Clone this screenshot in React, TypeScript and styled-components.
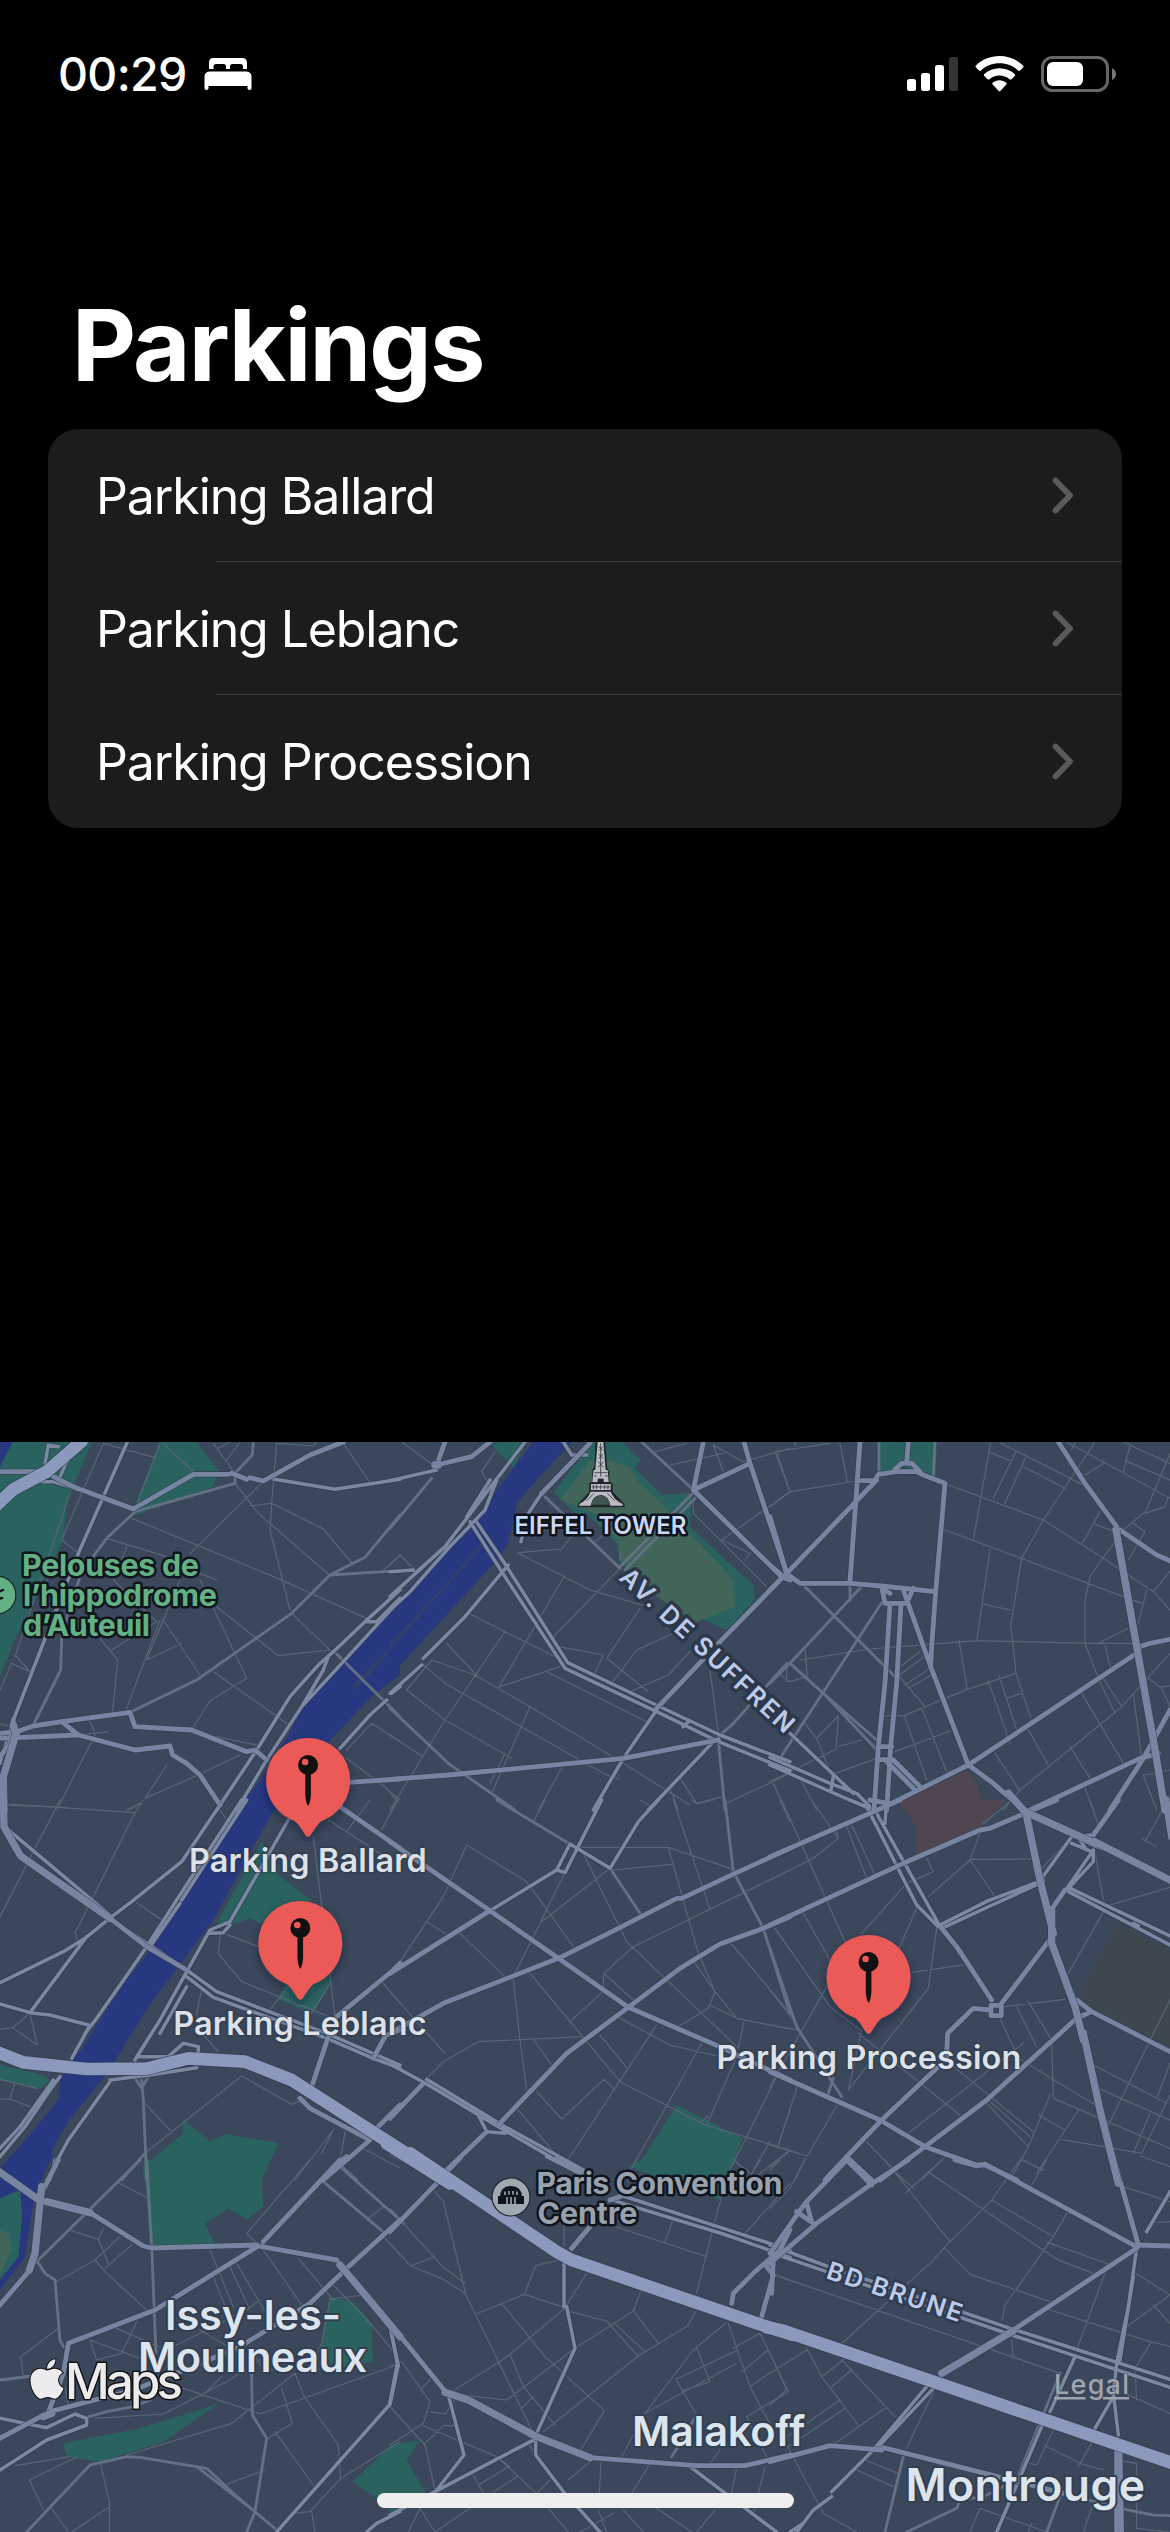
import React from "react";
import styled, { createGlobalStyle } from "styled-components";
import { FaApple } from "react-icons/fa";

const GlobalStyle = createGlobalStyle`
  body { margin: 0; background: #000; }
  * { box-sizing: border-box; }
`;

const Screen = styled.main`
  width: 1170px;
  height: 2532px;
  display: flex;
  flex-direction: column;
  overflow: hidden;
  background: #000;
  color: #fff;
  font-family: Inter, "Liberation Sans", sans-serif;
`;

const StatusBar = styled.header`
  height: 141px;
  padding: 45px 54px 0 58px;
  display: flex;
  justify-content: space-between;
  align-items: flex-start;
`;

const StatusGroup = styled.div<{ $gap: number }>`
  display: flex;
  align-items: center;
  height: 58px;
  gap: ${(p) => p.$gap}px;
`;

const Clock = styled.time`
  width: 130px;
  font-size: 46.5px;
  line-height: 58px;
  font-weight: 500;
  letter-spacing: -0.7px;
  white-space: nowrap;
`;

const Title = styled.h1`
  margin: 144px 0 0 72px;
  height: 144px;
  font-size: 99px;
  line-height: 120px;
  font-weight: 700;
  letter-spacing: -1.8px;
`;

const List = styled.ul`
  list-style: none;
  margin: 0 48px;
  padding: 0;
  border-radius: 30px;
  background: #1c1c1c;
  overflow: hidden;
`;

const Row = styled.li`
  height: 133px;
  padding: 0 48px;
  display: flex;
  align-items: center;
  justify-content: space-between;
  &:not(:last-child) {
    background: linear-gradient(#3d3d3f, #3d3d3f) 168px 132px / 100% 1px no-repeat;
  }
`;

const RowLabel = styled.span`
  font-size: 50px;
  line-height: 60px;
  font-weight: 400;
  letter-spacing: -1.1px;
`;

const Spacer = styled.div`
  flex: 1;
`;

const MapPanel = styled.section`
  position: relative;
  height: 1090px;
  background: #3b475a;
  overflow: hidden;
`;

const MapCanvas = styled.svg`
  display: block;
  width: 1170px;
  height: 1090px;
`;

const Marker = styled.div<{ $x: number; $y: number }>`
  position: absolute;
  left: ${(p) => p.$x}px;
  top: ${(p) => p.$y}px;
  transform: translateX(-50%);
  display: flex;
  flex-direction: column;
  align-items: center;
`;

const MarkerLabel = styled.span`
  margin-top: -1px;
  font-size: 32.4px;
  line-height: 40px;
  font-weight: 600;
  letter-spacing: 0.15px;
  white-space: nowrap;
  color: #dde2ea;
  text-shadow: 0 0 3px #2b3546, 0 0 2px #2b3546;
`;

const HomeIndicator = styled.div`
  position: absolute;
  left: 377px;
  top: 1051px;
  width: 417px;
  height: 15px;
  border-radius: 8px;
  background: #eee;
`;

const parkings = [
  { name: "Parking Ballard", x: 308, y: 296 },
  { name: "Parking Leblanc", x: 300, y: 459 },
  { name: "Parking Procession", x: 869, y: 493 },
];

/* Each sector holds its outlines at three units per pixel, relative to its own
   origin. Separate strokes within a layer are divided by "|". */
type Layer = "minor" | "street" | "quay" | "avenue" | "boulevard" | "ring";
type Area = [string, string];
interface Sector {
  x: number;
  y: number;
  areas: Area[];
  roads: Partial<Record<Layer, string>>;
}

const WATER = "#273880";
const ISLE = "#303f6c";
const PARK = "#2a625f";
const LAWN = "#416659";
const HOSPITAL = "#4f4652";
const CEMETERY = "#3e4750";

const sectors: Sector[] = [
  {
    x: 0, y: 1430,
    areas: [
      [PARK, "0,36 275,36 200,220 190,330 40,640 0,740"],
      [PARK, "480,36 590,36 655,120 640,170 390,262"],
      [WATER, "0,36 38,36 0,110"],
      [WATER, "1200,515 1040,690 905,840 860,925 800,1020 720,1140 850,1140 1000,920 1120,795 1200,735"],
      [ISLE, "1055,766 1200,622 1200,638 1068,776"],
    ],
    roads: {
      minor: "310,40 185,330 230,365|310,40 465,83|480,40 410,225|490,40 580,125|640,40 705,130|717,40 680,90|655,55 690,36|830,40 815,220 810,300 870,540|830,40 940,48 950,36|1030,40 1118,170|705,160 775,250 988,435|790,155 570,370|750,228 815,220 970,297 1058,402|395,265 870,460|600,430 650,450|810,435 1100,565|320,325 500,380|380,350 340,450 470,575 335,660|480,570 380,835|540,450 440,690 545,640|490,570 600,735|300,625 353,690 338,845|600,450 740,745|650,530 835,677 990,660|875,550 1000,670|640,725 860,880|740,745 630,812 575,900|210,190 45,680|45,675 90,725|90,725 35,700 0,780|270,870 285,915 170,1140|230,915 325,905|435,1105 605,1030 720,975|435,1105 500,1005|1040,960 1115,880 1200,935|1040,985 1140,1060 1200,1110|1150,420 1200,375|0,1125 200,1132|380,1140 420,1120|650,920 770,945|120,510 160,400|0,880 30,890",
      street: "390,847 590,750 875,550 990,435 1095,382 1200,255|990,435 1200,422|705,160 405,245 320,325 245,425 210,530 185,620 182,720 100,885|1010,672 1200,860|705,130 705,160|760,36 757,75 705,130",
      quay: "382,36 310,200 235,370 40,870 0,1000|1200,480 1095,575 1000,665 955,705 870,800 770,960 650,1140|1200,505 1130,575|1130,575 1095,575|1190,520 970,760 905,830 800,990 710,1140|985,680 970,720 905,830|1200,770 1175,790|1160,810 1110,855 1020,955|820,147 1005,178 1200,148|135,100 145,45 175,50|205,85 180,140|125,155 160,155 240,180",
      avenue: "0,125 155,125|160,140 220,170 400,237 580,133 685,133|695,130 740,148|750,143 790,153 930,75 1030,36|0,925 230,915|0,910 50,905|50,905 100,888 185,875 390,847 405,890 575,900 740,965 765,960 800,990|185,875 235,915 405,960 510,948 518,975 560,1000 600,1035 660,1125|40,870 30,940 0,980|1045,1057 1200,1047",
      boulevard: "50,905 10,1040 12,1140|40,885 50,920",
      ring: "245,34 140,125 40,178 -10,225",
    },
  },
  {
    x: 390, y: 1430,
    areas: [
      [PARK, "305,45 330,36 410,36 370,115"],
      [WATER, "430,36 320,180 290,240 260,270 170,365 60,470 -10,570 -10,750 330,380 355,340 380,220 440,150 545,36"],
      [ISLE, "0,642 275,342 278,350 0,658"],
      [PARK, "610,36 695,36 752,90 735,115 815,195 905,190 900,290 1090,465 1095,510 1010,600 945,570 860,540 690,400 680,340 590,250 560,255 490,185"],
      [LAWN, "600,90 650,90 720,110 745,155 830,235 900,310 1030,450 1035,530 910,580 850,535 790,490 690,390 685,330 610,250 510,210"],
    ],
    roads: {
      minor: "35,36 130,105|315,65 275,125 300,165|385,370 600,480 790,535|385,368 515,357 560,300|525,435 325,775|345,605 165,870 0,1140|235,550 345,605 515,690|690,415 490,620|750,535 650,685 775,785|505,650 640,675 615,730|665,760 740,660 870,600|720,785 835,735 900,665|470,725 770,875|125,690 255,735 420,830 700,1000 900,1125|95,700 165,760 640,1030 690,1050|50,780 165,870 365,985|50,780 125,690|330,770 510,710|515,1015 445,1140|420,830 305,1090|0,915 95,978|960,720 985,910|795,65 890,40|840,105 1000,70|970,45 1000,125|970,45 1060,95 1200,55|1160,65 1200,185 995,330|995,330 1080,370|910,220 910,250 1130,470|870,1045 920,1120 1000,1100|840,1075 865,1140|1150,1060 1185,1140|1010,1120 1200,1030|0,1090 25,1115|170,640 260,735|0,405 30,375 75,420|610,340 640,315|690,390 690,365|1080,370 1065,390|345,970 300,1060",
      street: "465,200 690,415|755,36 910,180|690,410 910,188|705,420 915,205|0,835 175,1000 375,1140|985,930 1005,1140|985,920 1030,880 1190,700|0,295 125,145",
      quay: "0,152 140,120|405,36 310,160 230,265 165,350 0,500|320,150 285,240 175,355 60,485 0,540|300,150 230,260|600,40 455,190 415,250|400,305 393,335|545,75 590,75|520,36 545,75|355,405 225,560 100,685|95,705 0,790|240,275 335,425 525,715 800,845 985,935 1200,1022|257,272 352,412 533,698 805,828 990,915 1200,995|880,890 895,875|700,985 610,1140|800,840 700,985|775,1140 975,930|0,425 70,420|75,430 165,350",
      avenue: "165,36 140,105 245,80 300,36|0,1048 175,1035 700,985 985,930|800,835 985,640 1175,445|940,36 910,180 1175,440 1200,450|910,180 1080,100 1062,36|1080,100 1190,430|600,40 455,190",
      boulevard: "135,105 145,105",
    },
  },
  {
    x: 770, y: 1430,
    areas: [
      [PARK, "325,36 500,36 498,135 450,130 400,110 325,128"],
      [HOSPITAL, "385,1115 590,1022 615,1050 640,1115 705,1115 680,1140 400,1140"],
    ],
    roads: {
      minor: "15,65 60,185 260,153|232,155 210,40|0,230 60,185|15,65 180,40|75,50 75,36|662,36 610,330|655,65 720,92|740,60 670,205|770,75 705,220|760,110 885,175|690,38 940,165|890,36 1200,205|535,165 820,270 1000,385 1150,485 1200,540|525,300 1115,520|915,36 905,60|975,36 900,150 820,270 755,385 722,585 738,730 783,865|660,360 620,632|637,522 722,540|300,657 620,632 985,640 1110,640|90,690 300,657|945,640 945,510 962,435 1060,300 1120,250|975,283 1035,305|990,245 937,340|1080,48 1060,125|1060,36 1200,100|1065,92 1200,150|1200,70 1125,250 1185,230 1195,200|1090,280 1125,305 1075,390|1200,425 1150,485|1130,480 1105,580|985,640 1075,595|945,640 985,745|1005,645 1020,710|985,745 1035,850|1000,745 1055,830|935,790 1060,1000|700,1140 750,1080 1050,835 1200,670|1135,745 1175,775 1200,830|1175,770 1200,768|1090,790 1115,985|900,950 970,1060|945,1075 970,1140|1125,1035 1200,1020|1120,1035 1160,1140|567,632 592,778 465,830|592,778 738,730|655,752 720,940|687,737 740,900|710,805 755,790|775,900 835,1005|675,970 748,1080|390,710 450,665|388,735 470,675|405,765 480,715|415,775 485,735|385,735 465,830|345,857 403,857 465,830|403,857 470,1050|455,835 530,1025|375,965 540,903|105,880 140,925 190,1050|140,925 205,858 198,958|205,950 275,930|0,1055 198,958|195,1030 320,985|10,1060 45,1140|95,1055 140,1140|105,660 112,740 60,755 30,735|50,755 50,700|945,135 1005,98",
      street: "335,518 30,985|270,475 60,700 0,760|240,460 240,510|105,470 385,750|60,700 160,790 330,970|160,790 320,930|495,36 490,140|327,36 327,125",
      quay: "0,982 180,1060 260,1090 310,1140|0,1005 170,1080 285,1130|60,910 250,1090|190,1040 182,1085",
      avenue: "270,36 262,150 240,455|275,152 315,152 325,133 380,125 440,125 460,135 525,160 497,485 485,650 482,710|375,118 395,100 425,100 450,125|415,36 410,100|320,150 50,430|0,260 50,430 90,460 240,460 335,468 495,485|0,405 40,440 0,480|335,470 345,520 410,520 430,475|345,482 360,490|400,480 482,710 595,1005|360,520 345,760 325,950 312,1140|393,520 380,760 362,950 350,1140|325,950 365,950|325,988 370,990 450,1070|345,990 435,1080|345,1130 595,1005 1100,670|595,1005 670,1060 760,1140|780,1140 1110,985 1165,970|865,36 945,160 1040,290|1050,300 1160,375 1200,392|1200,840 1120,985 1020,1140|1110,650 1140,640 1200,628",
      boulevard: "1038,300 1070,480 1100,650 1150,930 1185,1140",
    },
  },
  {
    x: 0, y: 1800,
    areas: [
      [WATER, "745,-20 620,180 545,300 540,320 460,440 380,540 300,660 250,740 220,780 180,840 175,900 0,1110 40,1140 110,1140 200,970 330,810 370,740 460,600 550,480 640,360 760,140 850,-20"],
      [PARK, "785,125 835,225 935,300 860,370 780,370 750,355 710,370 650,370"],
      [PARK, "860,545 960,520 1000,540 935,640 835,598"],
      [PARK, "0,795 130,825 150,840 120,868 0,840"],
      [PARK, "545,955 630,1025 675,1002 835,1030 785,1140 430,1140 430,1100 550,1000"],
    ],
    roads: {
      minor: "25,12 405,38|385,30 425,10|430,0 405,38|180,0 0,350|405,38 225,400 235,430|410,308 485,360|435,1060 725,828 875,913 920,895|430,905 510,990|605,570 590,640 610,705 655,755|660,405 655,460 725,545 1000,655|680,403 775,440|940,110 1005,650|985,60 1155,170|1110,0 1040,95|1190,0 1145,90|0,688 38,683 112,735 90,640 38,683|0,838 110,865|45,850 30,895|0,897 30,897 90,920|800,640 870,555|885,1140 1000,990 965,1060|1035,995 1020,1090|1150,550 1200,610|660,30 680,60|1080,1040 1200,1105|935,640 990,550",
      street: "425,840 430,900 440,1140|405,835 425,865 445,830|365,1140 435,1060|1020,1095 1070,1140",
      quay: "670,0 545,185 395,305 335,350 255,415 190,455 0,548|260,410 90,638|725,0 530,300 440,440 385,520 290,655 255,700|740,0 545,300|0,612 90,638 150,645 265,675|265,685 215,775|540,310 450,440|865,60 690,365 630,390 560,515|690,375 670,398 625,400|560,515 480,660 405,780|480,660 410,770|560,560 480,700|410,770 505,770 550,730 595,740|595,740 595,755|180,830 150,870 75,980 0,1070|160,840 60,980 0,1045|330,845 205,1020 140,1140|330,840 450,825 590,803|335,360 560,510 650,575 980,700 1200,795|560,530 640,592 980,715 1120,775 1200,805|20,85 335,350",
      avenue: "1120,775 1155,710|1010,650 1180,510 1200,490|985,710 935,860|1020,20 1200,145|1200,915 1130,985|900,895 930,925 1110,1020 970,1140|330,355 440,440 560,510|1160,705 1200,690",
      boulevard: "10,-20 12,80 60,165|65,170 330,355",
      ring: "-20,752 70,787 260,807 440,806 565,775 735,785 875,840 1210,1055",
    },
  },
  {
    x: 390, y: 1800,
    areas: [[PARK, "860,915 1058,1015 1010,1140 850,1140 718,1100 755,1080"]],
    roads: {
      minor: "465,0 430,65|230,135 410,245 550,440|230,135 160,290 20,500|110,365 165,400|210,400 345,530|525,218 365,540|575,150 710,425 1045,745|660,205 455,365|575,142 835,142 1030,208|670,210 845,193|835,142 925,460 975,575|960,615 1040,655 1200,687|975,575 1040,655|850,0 960,328|730,440 1200,210|730,440 642,520 638,575 540,665|642,520 730,600|370,540 390,720 410,870|420,520 690,845 945,975 1200,1050|105,840 160,785 265,725 575,710|430,718 485,795|630,705 710,803|800,675 530,1085|690,655 840,735 980,768|935,730 725,1105|440,875 515,957 642,838 670,865|385,930 515,1085|1160,830 1020,1110|1040,770 950,975|930,968 955,948|1062,665 1045,745|915,490 975,575 955,625 865,680|1155,385 1200,450|1025,432 1200,640|0,575 165,760|750,0 785,20|905,0 920,12 970,0|1170,0 1200,65|1200,930 1165,1035|1200,1050 1085,1140|1030,1080 1080,1120|1140,1025 1090,1110|0,45 25,0|0,1065 120,1125",
      street: "320,0 540,132|660,205 750,340|1005,0 1030,215 1120,385 1200,640",
      quay: "300,332 500,210 525,218 635,0|500,210 540,132 660,205 745,65 805,0|0,792 110,852 325,980 575,1125|110,838 345,980 590,1115|265,945 290,995 345,1000",
      avenue: "0,125 300,332 505,475 715,622 1000,745 1200,840|0,520 300,332|0,700 160,610 505,475 685,385 860,295 875,295 1035,220 1200,145|325,975 530,760 715,622 870,505 990,432 1120,385 1200,350|290,995 170,1110|0,955 100,850",
      ring: "-10,1030 180,1150",
    },
  },
  {
    x: 770, y: 1800,
    areas: [
      [HOSPITAL, "390,0 705,0 635,80 440,165 438,80"],
      [CEMETERY, "1040,370 1200,450 1200,740 920,595"],
    ],
    roads: {
      minor: "35,0 225,425|125,0 205,115 130,175 0,240|205,115 200,90|228,75 290,235|245,75 315,225|470,175 490,215 410,250 275,400|440,325 385,450|500,385 475,565 235,870|425,517 580,495|600,178 790,177|675,290 600,180 635,85|475,290 600,180|640,70 720,5|15,385 180,620 270,690|100,340 180,480|170,560 0,860|0,675 85,690|0,570 85,680|275,690 235,870|210,900 112,1068 0,1035|265,700 570,945|85,850 25,1035|0,1100 60,1052|105,1075 75,1140|290,1025 400,1140|415,1000 760,730|520,775 790,995|645,905 775,1040|660,905 780,1010|700,620 885,598|690,655 745,775 985,920|740,620 800,740|775,605 845,720 850,895 1200,1045|840,885 775,1040 720,1140|925,930 800,1120|805,945 885,990|750,1075 815,1110|875,1018 1115,1060 1200,885|1090,1060 1140,940|970,795 1190,910|985,865 1200,960|1110,1068 1200,1100|1200,600 1010,985|1200,790 1160,895|975,160 1000,300|1000,335 895,520|1020,315 1200,262|815,205 920,95|960,0 985,75|1115,115 1160,140|1180,25 1125,125|455,1140 525,1070|480,1120 510,1140",
      street: "0,445 80,680 215,890|190,835 175,880",
      quay: "240,0 290,20 440,315 505,380|310,10 325,50 505,370|350,0 345,70|510,375 655,302 820,240|515,385 660,318 820,245|815,235 905,110 970,105|905,130 965,155|920,105 950,150|860,310 970,150|970,150 970,185 895,265|895,262 1200,408|895,275 1200,435|1090,370 1105,378",
      avenue: "0,170 300,40 390,0|0,375 400,190 630,90 660,85 765,40 860,0|515,385 560,440 665,600|695,610 835,425|0,815 330,960 465,1040 620,1095 645,1095 740,1140|530,760 533,700 610,625 660,630|500,805 335,960 230,1070 165,1140|530,745 530,770|330,1140 465,1040 650,900 920,655 965,635|920,600 965,635 1200,755|230,1070 305,1140|1045,0 970,105|840,335 885,270|663,616 694,616 694,647 663,647 663,616|960,130 1000,145|300,0 355,10",
      boulevard: "715,-20 765,35 975,130|975,125 1200,240|768,40 810,240 850,400|845,330 845,430 915,620 940,720|940,700 990,930 1045,1150|1188,0 1205,110",
    },
  },
  {
    x: 0, y: 2160,
    areas: [
      [WATER, "40,-20 160,-20 115,80 100,130 75,290 0,390 0,110 0,25"],
      [PARK, "0,115 60,90 67,160 55,290 0,360"],
      [LAWN, "0,210 25,220 35,270 0,345"],
      [PARK, "430,0 810,0 785,60 790,140 740,180 685,145 615,190 645,255 450,255"],
      [PARK, "990,412 1060,425 1115,490 1118,605 940,635 965,560"],
      [PARK, "190,850 420,805 655,732 490,845 300,905 200,890"],
      [PARK, "1057,965 1175,855 1200,850 1200,1060 1130,1015"],
    ],
    roads: {
      minor: "355,68 440,112|1105,175 1150,140|1155,235 1200,285|930,0 740,220 770,250|215,212 295,238 325,310|310,205 295,238|360,230 285,300 170,365|285,300 315,335 445,455|315,325 395,255|630,270 700,440|640,350 680,450|690,320 745,440|710,310 795,455|780,255 915,450|895,295 1000,420|1000,375 1115,495 1185,580|990,418 1090,405|990,418 965,550 930,630|350,505 500,570|270,540 420,595|270,540 290,600 365,580 410,485|175,505 62,590 70,650|285,775 490,762 680,665 780,600|550,685 780,762 1190,615|380,885 695,790 885,640|615,700 665,650|750,560 790,630 870,630|885,640 910,705 1015,855 1022,960|845,685 877,790 805,835|825,815 940,975|1200,845 1022,955 930,1055 880,1060|935,1055 945,1116|1168,740 1200,770|675,975 795,930|45,917 210,890|230,892 88,960 130,1050|300,905 328,1025 328,1116|155,1045 205,1116|215,1116 328,1040|500,570 740,450 780,420|600,510 700,570|195,680 205,735",
      street: "440,0 455,260 468,580|420,0 105,310|105,295 135,340 165,360 180,540 190,560|0,660 120,645|250,775 320,755 400,740 450,720|755,640 757,765 800,835 765,1055 740,1116|80,1116 270,915 380,890 420,892 620,925 700,1000 830,1110|590,920 765,1055|970,65 1155,220|1020,20 1200,180",
      quay: "0,775 140,803 225,762 260,775 260,795 140,840 0,930|1170,500 1192,610 1168,735 830,1116|1100,1116 1130,1090 1200,1055|165,0 150,60",
      avenue: "430,258 455,264 770,255|1005,20 1040,-10|1020,0 790,245|785,260 1010,300|1040,325 1200,180|1035,330 930,430 720,560 530,640 400,690 150,755 0,835|775,258 465,450 205,550 190,640 140,770|0,435 90,330|270,158 430,258|175,0 130,90",
      boulevard: "-10,30 110,115|140,125 270,158|125,80 105,280 88,330|1020,315 1100,410 1200,530|130,770 155,760",
    },
  },
  {
    x: 390, y: 2160,
    areas: [
      [PARK, "0,855 90,840 50,900 105,995 0,1060"],
      [PARK, "750,0 1030,0 990,120 715,20"],
    ],
    roads: {
      minor: "40,190 160,322 225,370|135,95 160,125 228,405 435,830|0,250 62,318 135,290|62,318 160,358 225,400|522,155 522,260|510,300 437,317 403,403 258,462|403,403 525,443 590,340|335,430 465,590 643,752 575,865|525,445 345,595 185,695|200,703 350,720 555,565 680,485 730,452 752,395|360,583 400,680 497,797|395,745 430,710|540,455 650,483 745,590|670,487 763,573|730,452 803,548|460,815 745,588 893,497 917,455|670,198 950,290|848,182 825,245|995,110 970,200 920,400|1200,70 1065,220|1160,345 1200,362|1010,487 910,570 765,760 1040,610|920,565 960,665 875,693|858,658 1040,572|858,658 920,765|1015,490 1080,680 1150,810|1030,565 1110,520 1195,695 1070,770 1130,890|1055,635 1135,570|1080,680 1145,635|765,760 695,890|0,740 105,855 135,990|0,855 100,790 120,725 35,605|0,620 35,605|95,685 120,660|120,755 165,762 195,720|105,850 160,797 195,797|95,795 320,890 440,1000|250,945 280,1000|265,975 355,920|310,997 380,950|320,890 360,920|415,850 435,880|440,1000 480,960|535,960 600,905|633,905 628,1000|790,895 725,1000|1040,925 1025,1000|1125,920 1105,1000|990,870 960,910|55,1116 90,1045 135,1116 240,1045|475,1045 535,1116|570,1116 670,1060|625,1050 650,1116|700,1050 760,1116|800,1045 905,1116|920,1116 975,1050|1090,1060 1095,1045|1080,50 1110,0|1030,0 1060,25",
      street: "0,150 40,190|845,890 920,765",
      quay: "470,-10 600,55|500,-10 620,60|660,118 1000,222 1200,292|690,105 1000,205 1200,270|522,310 522,440|530,440 555,565 440,820|175,705 222,885 140,990|440,835 125,1000 0,1065|437,840 437,885 520,995 630,1116|0,500 25,615 0,735|900,920 1160,1116",
      avenue: "0,215 145,65|175,30 210,-5|545,265 600,200|1025,430 1030,400 1095,335 1170,270 1200,210|1130,320 1150,345 1115,470|600,893 920,917 1065,917 1200,885|0,490 170,700|660,120 690,110",
      boulevard: "165,697 235,720 440,830 600,893",
      ring: "60,-20 500,275 545,300 1100,490 1210,525",
    },
  },
  {
    x: 770, y: 2160,
    areas: [],
    roads: {
      minor: "345,0 540,245|515,0 405,100|380,40 430,85|480,40 860,298 970,340|665,120 850,230|890,160 850,230 705,435 697,480|750,0 665,120 540,245 480,310 210,555|785,75 830,0|755,0 820,30|832,247 1015,312 920,570|525,265 600,343 840,425|0,340 870,640|825,445 1140,545|1145,545 1095,625 1100,720|1070,500 1200,405 1090,335|1150,435 1200,490|1060,80 1200,125|1155,187 1200,185|1065,700 1200,760|725,540 730,590|490,695 410,865|0,580 50,690 0,735|110,565 155,650 265,795|0,640 110,570|155,650 245,580|215,600 375,770|185,680 245,630|55,860 225,745|195,850 345,745|45,835 210,720|50,855 160,1060 260,1116|285,900 385,940|260,930 370,980|850,810 800,915 780,910|825,857 930,910 1000,930|965,850 925,920|1055,903 1100,910 1100,1105 1200,1116|600,1116 630,1045|630,1045 830,1116|970,1030 940,1116|785,1090 775,1116|60,85 105,0|0,145 60,85|0,30 30,0|1145,545 1200,560",
      street: "400,890 345,1116|410,1116 560,1045 570,1020 640,1010 740,960|870,1010 830,1116|880,1000 1050,1045 1150,1065 1200,1067|740,960 870,640",
      quay: "1200,95 1130,215|0,255 170,318 730,508 1200,658|0,277 725,525 1200,682|1090,350 1050,600|1100,265 1075,440 1040,610 1030,700 1045,825|915,590 840,755|815,800 680,1116|1030,710 975,805|470,680 310,870 185,995|490,685 320,865|185,1010 130,1050 80,1116|60,1116 100,1090",
      avenue: "0,280 105,130 230,0|230,0 305,75|0,310 140,190 300,75 415,0|80,155 130,190|110,130 125,185|555,0 620,18 645,12 1090,255|1030,-10 1105,255 1200,258|1100,265 730,510|0,905 180,857 335,870|340,863 880,1000|10,300 5,400|1040,870 1040,1116|1050,870 1055,1116",
      boulevard: "730,512 600,590 515,640",
      ring: "-10,502 40,512 460,655 1210,910",
    },
  },
];

const layerStyle: Record<Layer, { color: string; width: number; casing: number }> = {
  minor: { color: "#5a6677", width: 3.6, casing: 0 },
  street: { color: "#647084", width: 8.5, casing: 0 },
  quay: { color: "#7a88a1", width: 10.5, casing: 5 },
  avenue: { color: "#7785a1", width: 14.5, casing: 4 },
  boulevard: { color: "#7785a1", width: 22, casing: 4 },
  ring: { color: "#8a99bc", width: 38, casing: 5 },
};
const layerOrder: Layer[] = ["minor", "street", "quay", "avenue", "boulevard", "ring"];

const toPath = (strokes: string) => "M" + strokes.split("|").join("M");

const Strokes = ({ layer, casing }: { layer: Layer; casing?: boolean }) => {
  const s = layerStyle[layer];
  return (
    <g
      fill="none"
      strokeLinejoin="round"
      strokeLinecap={casing ? "butt" : "round"}
      stroke={casing ? "#2d384b" : s.color}
      strokeOpacity={casing ? 0.6 : 1}
      strokeWidth={casing ? s.width + s.casing : s.width}
    >
      {sectors.map((t) =>
        t.roads[layer] ? (
          <path
            key={`${t.x}-${t.y}`}
            transform={`translate(${t.x} ${t.y}) scale(.33333)`}
            d={toPath(t.roads[layer] as string)}
          />
        ) : null
      )}
    </g>
  );
};

interface LabelProps {
  x: number;
  y: number;
  w: number;
  size: number;
  fill: string;
  halo: string;
  haloWidth?: number;
  weight?: number;
  angle?: number;
  children: string;
}

const MapLabel = ({ x, y, w, size, fill, halo, haloWidth = 4, weight = 600, angle = 0, children }: LabelProps) => (
  <text
    transform={`translate(${x} ${y}) rotate(${angle})`}
    textLength={w}
    fontFamily="Inter, 'Liberation Sans', sans-serif"
    fontSize={size}
    fontWeight={weight}
    fill={fill}
    stroke={halo}
    strokeWidth={haloWidth}
    strokeLinejoin="round"
    paintOrder="stroke"
  >
    {children}
  </text>
);

const EiffelTower = () => (
  <g transform="translate(390 1430) scale(.33333)">
    <path
      d="M617 30H645L652 115L658 125V155L668 160V185L704 222V232H563V222L598 185V160L607 155V120L613 110Z"
      fill="#22262b"
    />
    <path
      d="M623 36H640L647 120H653L656 156H607L611 120H616ZM603 162H662V180H603ZM602 185H662Q670 208 698 222V227H661Q655 195 632 195Q609 195 602 227H568V222Q592 210 602 185Z"
      fill="#b9bdc2"
    />
    <path d="M603 224H661Q655 197 632 197Q609 197 603 224Z" fill="#40554f" />
    <path d="M623 146H641V160H623Z" fill="#22262b" />
    <path
      d="M632 40V140M627 50L638 62M638 50L627 62M626 72L639 86M639 72L626 86M624 95L641 112M641 95L624 112M614 128H652M612 138H620M645 138H654M606 171H660M610 164V178M620 164V178M632 164V178M644 164V178M654 164V178M590 212L612 190M674 212L652 190"
      stroke="#3a3e44"
      strokeWidth="2.6"
      fill="none"
    />
  </g>
);

const ConventionIcon = () => (
  <g>
    <circle cx="511" cy="2197" r="19.6" fill="#20252e" />
    <circle cx="511" cy="2197" r="18.4" fill="#9fa9b2" />
    <path d="M498 2204V2196H500Q501 2186 511 2186Q521 2186 522 2196H524V2204Z" fill="#12151b" />
    <path d="M505 2191.5V2195M509 2191V2194.5M513 2191V2194.5M517 2191.5V2195M507 2197V2204M511 2197V2204M515 2197V2204" stroke="#9fa9b2" strokeWidth="1.6" />
  </g>
);

const ParisMap = () => (
  <MapCanvas viewBox="0 1442 1170 1090">
    {sectors.map((t) => (
      <g key={`${t.x}-${t.y}`} transform={`translate(${t.x} ${t.y}) scale(.33333)`}>
        {t.areas.map(([fill, points]) => (
          <polygon key={points} points={points} fill={fill} />
        ))}
      </g>
    ))}
    {layerOrder.map((layer) => (
      <g key={layer}>
        {layerStyle[layer].casing > 0 && <Strokes layer={layer} casing />}
        <Strokes layer={layer} />
      </g>
    ))}
    <EiffelTower />
    <MapLabel x={514.5} y={1534} w={172} size={24} fill="#cbd8f7" halo="#0f131c" haloWidth={5}>EIFFEL TOWER</MapLabel>
    <MapLabel x={618} y={1579} w={228} size={25} weight={600} angle={43} fill="#bccaea" halo="#2c3749" haloWidth={7}>AV. DE SUFFREN</MapLabel>
    <MapLabel x={825} y={2278} w={141} size={25} weight={600} angle={18.3} fill="#bccaea" halo="#2f3b4e" haloWidth={5}>BD BRUNE</MapLabel>
    <circle cx="-3" cy="1595" r="19.4" fill="#18221f" />
    <circle cx="-3" cy="1595" r="18.3" fill="#62b084" />
    <path d="M-2 1592L3 1590M-2 1599L2 1598" stroke="#111" strokeWidth="2.4" strokeLinecap="round" />
    <MapLabel x={22} y={1576} w={177} size={30.5} weight={700} fill="#62b084" halo="#10161c" haloWidth={5}>Pelouses de</MapLabel>
    <MapLabel x={23} y={1606} w={194} size={30.5} weight={700} fill="#62b084" halo="#10161c" haloWidth={5}>l’hippodrome</MapLabel>
    <MapLabel x={23} y={1635.7} w={127} size={30.5} weight={700} fill="#62b084" halo="#10161c" haloWidth={5}>d’Auteuil</MapLabel>
    <ConventionIcon />
    <MapLabel x={536.5} y={2194} w={246} size={30.5} weight={700} fill="#98a2ae" halo="#10141c" haloWidth={5}>Paris Convention</MapLabel>
    <MapLabel x={537.5} y={2224} w={100} size={30.5} weight={700} fill="#98a2ae" halo="#10141c" haloWidth={5}>Centre</MapLabel>
    <MapLabel x={165} y={2330} w={176} size={41.5} fill="#dce4ee" halo="#333e51">Issy-les-</MapLabel>
    <MapLabel x={138} y={2371.7} w={229} size={41.5} fill="#dce4ee" halo="#333e51">Moulineaux</MapLabel>
    <MapLabel x={632} y={2445.7} w={173.5} size={41.5} fill="#dce4ee" halo="#333e51">Malakoff</MapLabel>
    <MapLabel x={905.5} y={2500.7} w={239.5} size={44.5} fill="#dce4ee" halo="#333e51">Montrouge</MapLabel>
    <FaApple x="24.5" y="2356.500" size={45} color="#ececee" stroke="#111" strokeWidth={24} style={{ paintOrder: "stroke", overflow: "visible" }} />
    <MapLabel x={65} y={2399} w={118} size={49} weight={500} fill="#ececee" halo="#111" haloWidth={3}>Maps</MapLabel>
    <MapLabel x={1054} y={2394} w={75} size={27} weight={500} fill="#a0a5ad" halo="#3b475a" haloWidth={1}>Legal</MapLabel>
    <path d="M1054 2398.3H1085.5M1103 2398.3H1129" stroke="#a0a5ad" strokeWidth="2.4" />
  </MapCanvas>
);

const PinIcon = () => (
  <svg width="110" height="108" viewBox="-55 -46 110 108">
    <defs>
      <filter id="pinShadow" x="-30%" y="-30%" width="160%" height="160%">
        <feDropShadow dx="0" dy="4" stdDeviation="4" floodColor="#10182a" floodOpacity=".45" />
      </filter>
    </defs>
    <path
      filter="url(#pinShadow)"
      fill="#eb5a56"
      d="M0-42A42 42 0 0 1 42 0C42 20 29 35 13.500 41C9 44 5.500 51 2.200 55.500Q0 58 -2.200 55.500C-5.500 51-9 44-13.500 41C-29 35-42 20-42 0A42 42 0 0 1 0-42Z"
    />
    <circle cx="0" cy="-15" r="10" fill="#111" />
    <path d="M-2.800-8H2.800V15Q2.200 23 0 26Q-2.200 23-2.800 15Z" fill="#111" />
    <circle cx="-3" cy="-18" r="3.3" fill="#eb5a56" />
  </svg>
);

const BedIcon = () => (
  <svg width="48" height="34" viewBox="0 0 48 34">
    <path
      fill="#fff"
      d="M9 1H38Q43 1 43 6V12H39V9.500Q39 7 36.500 7H28.500Q26 7 26 9.500V12H22V9.500Q22 7 19.500 7H12Q9.500 7 9.500 9.500V12H5V6Q5 1 9 1ZM6 14.500H42Q47.500 14.500 47.500 20V31Q47.500 33 45.500 33Q43.500 33 43.500 31V29H4.500V31Q4.500 33 2.500 33Q.5 33 .5 31V20Q.5 14.500 6 14.500Z"
    />
  </svg>
);

const SignalIcon = () => (
  <svg width="51" height="36" viewBox="0 0 51 36">
    <rect x="0" y="23" width="9" height="12" rx="2.500" fill="#fff" />
    <rect x="14" y="17" width="9" height="18" rx="2.500" fill="#fff" />
    <rect x="28" y="9" width="9" height="26" rx="2.500" fill="#fff" />
    <rect x="42" y="1" width="9" height="34" rx="2.500" fill="#333" />
  </svg>
);

const WifiIcon = () => (
  <svg width="49" height="36" viewBox="0 0 49 36">
    <path
      fill="#fff"
      d="M24.500 0C33.500 0 42 3.500 48 9.500Q49 10.500 48 11.500L45 14.500Q44 15.300 43 14.500C38 9.800 31.500 7.300 24.500 7.300S11 9.800 6 14.500Q5 15.300 4 14.500L1 11.500Q0 10.500 1 9.500C7 3.500 15.500 0 24.500 0ZM24.500 12.200C30.300 12.200 35.600 14.300 39.700 18Q40.700 19 39.700 20L36.500 23.200Q35.500 24 34.500 23.200C31.700 20.800 28.300 19.500 24.500 19.500S17.300 20.800 14.500 23.200Q13.500 24 12.500 23.200L9.300 20Q8.300 19 9.300 18C13.400 14.300 18.700 12.200 24.500 12.200ZM24.500 24.300C27 24.300 29.400 25.200 31.300 26.700Q32.200 27.500 31.300 28.500L25.500 34.800Q24.500 35.800 23.500 34.800L17.700 28.500Q16.800 27.500 17.700 26.700C19.600 25.200 22 24.300 24.500 24.300Z"
    />
  </svg>
);

const BatteryIcon = () => (
  <svg width="75" height="36" viewBox="0 0 75 36">
    <rect x="1.500" y="1.500" width="65" height="33" rx="10" fill="none" stroke="#666" strokeWidth="3" />
    <rect x="6" y="6" width="36" height="24" rx="6" fill="#fff" />
    <path d="M71 12Q75 14 75 18T71 24Z" fill="#777" />
  </svg>
);

const Chevron = () => (
  <svg width="24" height="40" viewBox="0 0 24 40">
    <path d="M5.500 4.500L20 19.500L5.500 34.500" fill="none" stroke="#5a5a5e" strokeWidth="5.800" strokeLinecap="round" strokeLinejoin="round" />
  </svg>
);

export default function App() {
  return (
    <Screen>
      <GlobalStyle />
      <StatusBar>
        <StatusGroup $gap={16}>
          <Clock>00:29</Clock>
          <BedIcon />
        </StatusGroup>
        <StatusGroup $gap={17}>
          <SignalIcon />
          <WifiIcon />
          <BatteryIcon />
        </StatusGroup>
      </StatusBar>
      <Title>Parkings</Title>
      <List>
        {parkings.map((p) => (
          <Row key={p.name}>
            <RowLabel>{p.name}</RowLabel>
            <Chevron />
          </Row>
        ))}
      </List>
      <Spacer />
      <MapPanel>
        <ParisMap />
        {parkings.map((p) => (
          <Marker key={p.name} $x={p.x} $y={p.y - 4}>
            <PinIcon />
            <MarkerLabel>{p.name}</MarkerLabel>
          </Marker>
        ))}
        <HomeIndicator />
      </MapPanel>
    </Screen>
  );
}
